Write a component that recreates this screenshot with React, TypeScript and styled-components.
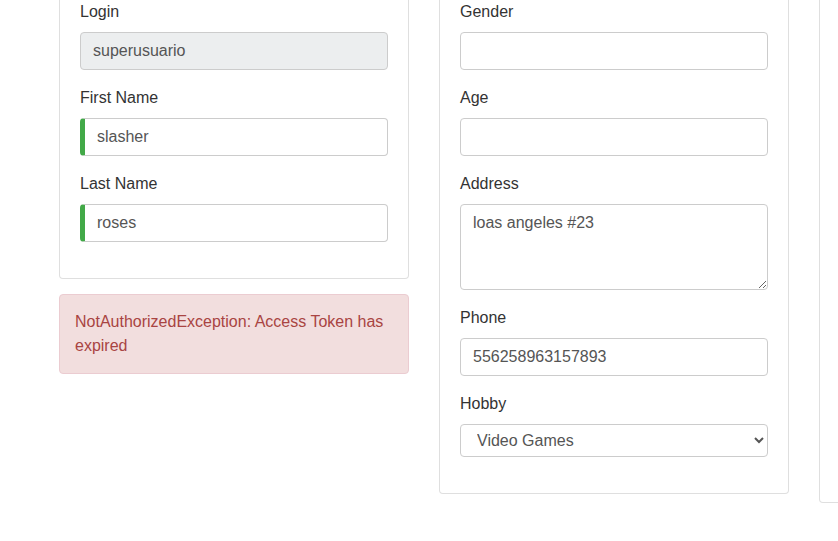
import React from "react";
import styled, { createGlobalStyle } from "styled-components";

const Global = createGlobalStyle`
  html, body { margin: 0; padding: 0; background: #fff; }
  body {
    font-family: "Liberation Sans", Arial, sans-serif;
    font-size: 16px;
    line-height: 1.5;
    color: #212529;
    overflow: hidden;
  }
  * { box-sizing: border-box; }
`;

const Row = styled.div`
  display: flex;
  align-items: flex-start;
  gap: 30px;
  padding-left: 59px;
  margin-top: -21px;
  width: 838px;
  overflow: hidden;
`;

const Column = styled.div`
  flex: 0 0 350px;
  display: flex;
  flex-direction: column;
  gap: 15px;
`;

const Card = styled.div<{ $minHeight?: number }>`
  border: 1px solid rgba(0, 0, 0, 0.125);
  border-radius: 4px;
  background: #fff;
  padding: 20px;
  min-height: ${(p) => (p.$minHeight ? `${p.$minHeight}px` : "auto")};
`;

const Group = styled.div`
  display: flex;
  flex-direction: column;
  margin-bottom: 16px;
`;

const Label = styled.label`
  display: block;
  margin-bottom: 8px;
  line-height: 24px;
  color: #333;
`;

const Input = styled.input<{ $valid?: boolean }>`
  width: 100%;
  height: 38px;
  padding: 6px 12px;
  font-family: inherit;
  font-size: 16px;
  line-height: 24px;
  color: #555;
  background: #fff;
  border: 1px solid #ccc;
  border-left: ${(p) => (p.$valid ? "5px solid #42A948" : "1px solid #ccc")};
  border-radius: 4px;
  outline: none;
  &:disabled {
    background: #eceeef;
    color: #555;
  }
`;

const TextArea = styled.textarea`
  width: 100%;
  height: 86px;
  padding: 6px 12px;
  font-family: inherit;
  font-size: 16px;
  line-height: 24px;
  color: #555;
  border: 1px solid #ccc;
  border-radius: 4px;
  resize: vertical;
  outline: none;
  display: block;
`;

const Select = styled.select`
  width: 100%;
  height: 33px;
  padding: 0 8px 0 12px;
  font-family: inherit;
  font-size: 16px;
  color: #555;
  background: #fff;
  border: 1px solid #ccc;
  border-radius: 4px;
  outline: none;
`;

const Alert = styled.div`
  padding: 15px;
  border: 1px solid #ebccd1;
  border-radius: 4px;
  background: #f2dede;
  color: #a94442;
  line-height: 24px;
`;

export default function App() {
  return (
    <>
      <Global />
      <Row>
        <Column>
          <Card>
            <Group>
              <Label>Login</Label>
              <Input defaultValue="superusuario" disabled />
            </Group>
            <Group>
              <Label>First Name</Label>
              <Input defaultValue="slasher" $valid />
            </Group>
            <Group>
              <Label>Last Name</Label>
              <Input defaultValue="roses" $valid />
            </Group>
          </Card>
          <Alert>NotAuthorizedException: Access Token has expired</Alert>
        </Column>
        <Column>
          <Card>
            <Group>
              <Label>Gender</Label>
              <Input defaultValue="" />
            </Group>
            <Group>
              <Label>Age</Label>
              <Input defaultValue="" />
            </Group>
            <Group>
              <Label>Address</Label>
              <TextArea rows={3} defaultValue="loas angeles #23" />
            </Group>
            <Group>
              <Label>Phone</Label>
              <Input defaultValue="556258963157893" />
            </Group>
            <Group>
              <Label>Hobby</Label>
              <Select defaultValue="Video Games">
                <option>Video Games</option>
                <option>Sports</option>
                <option>Music</option>
              </Select>
            </Group>
          </Card>
        </Column>
        <Column>
          <Card $minHeight={524} />
        </Column>
      </Row>
    </>
  );
}
